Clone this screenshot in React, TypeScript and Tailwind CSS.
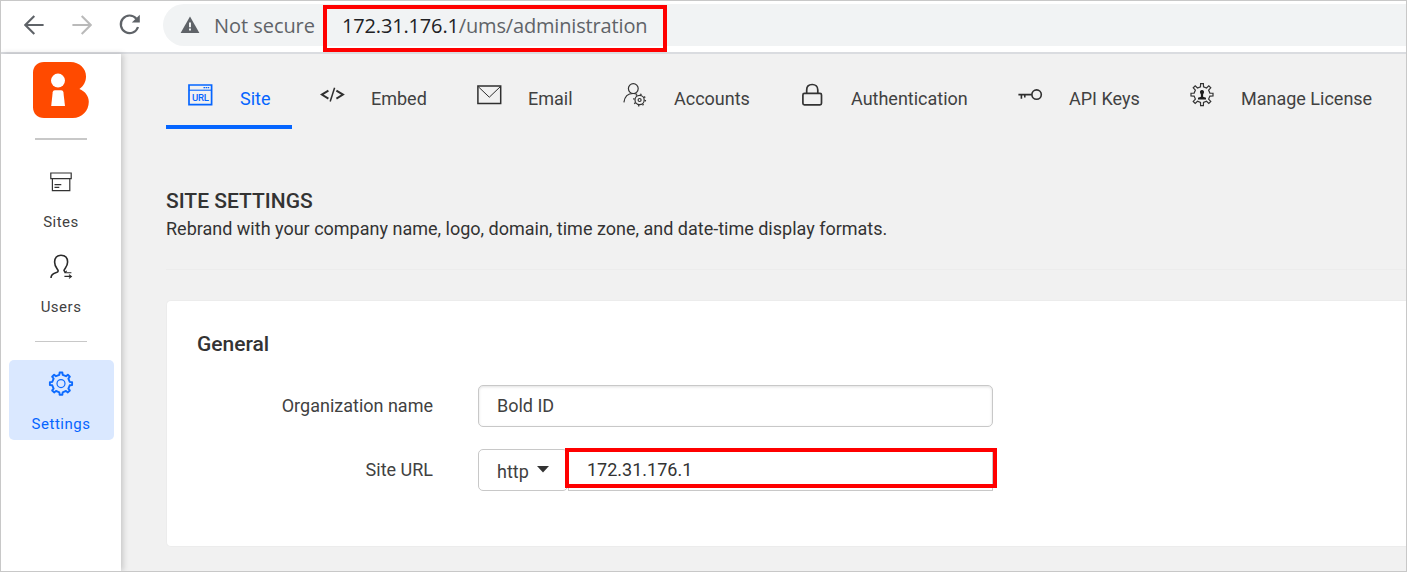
import type { ReactNode } from "react";

const gearPath = (cx: number, cy: number, outer: number, inner: number, teeth: number) => {
  const pts: string[] = [];
  const step = (Math.PI * 2) / teeth;
  for (let i = 0; i < teeth; i++) {
    const a = i * step - Math.PI / 2;
    const add = (r: number, t: number) =>
      pts.push(`${(cx + r * Math.cos(t)).toFixed(2)} ${(cy + r * Math.sin(t)).toFixed(2)}`);
    add(inner, a - step * 0.24);
    add(outer, a - step * 0.16);
    add(outer, a + step * 0.16);
    add(inner, a + step * 0.24);
  }
  return `M${pts.join("L")}Z`;
};

function BackArrow({ flip = false }: { flip?: boolean }) {
  return (
    <svg width="20" height="20" viewBox="0 0 20 20" fill="none" stroke={flip ? "#bababa" : "#5f6368"} strokeWidth="2.1" className={flip ? "-scale-x-100" : ""}>
      <path d="M19.6 10H1.6M10.3 1 1.3 10l9 9" />
    </svg>
  );
}

function Reload() {
  return (
    <svg width="22" height="22" viewBox="0 0 22 22" fill="none">
      <path d="M17.4 4.7A8.8 8.8 0 1 0 19 13" stroke="#5f6368" strokeWidth="2.2" />
      <path d="M20.8 .8V8.6h-8z" fill="#5f6368" />
    </svg>
  );
}

function Warning() {
  return (
    <svg width="20" height="18" viewBox="0 0 20 18">
      <path d="M10 .4 19.4 16.9H.6z" fill="#5f6368" />
      <path d="M9 6.6h2v4.6H9zM9 12.6h2v2H9z" fill="#f1f3f4" />
    </svg>
  );
}

function Logo() {
  return (
    <svg width="56" height="56" viewBox="0 0 56 56">
      <path d="M11 0H37.5C46.5 0 53 6.4 53 14.6C53 19.5 50.7 24.3 46.4 27C52.2 29.3 55.8 34.3 55.8 39.8C55.8 49 48.8 56 39.8 56H11C4.5 56 0 51.5 0 45.2V10.8C0 4.5 4.5 0 11 0Z" fill="#ff4a00" />
      <circle cx="25" cy="18.6" r="7" fill="#fff" />
      <path d="M21.8 28.3H28.2C29.4 28.3 30.2 29 30.4 30.3L32 43.9H18.2L19.7 30.3C19.9 29 20.6 28.3 21.8 28.3Z" fill="#fff" />
    </svg>
  );
}

function SitesIcon() {
  return (
    <svg width="22" height="20" viewBox="0 0 22 20" fill="none" stroke="#333" strokeWidth="1.2">
      <path d="M.8 1h20.4v5.6H.8zM2.4 6.6v12h17.4v-12M4.5 12.6h6.8M4.5 15.4h4.8" />
    </svg>
  );
}

function UsersIcon() {
  return (
    <svg width="24" height="26" viewBox="0 0 24 26" fill="none" stroke="#2b2b2b" strokeWidth="1.6">
      <path d="M2 24C2 17.8 9.2 19.6 9.2 17C9.2 15 5.6 13.4 5.6 8C5.6 3.8 8 1.2 12 1.2C16 1.2 18.6 3.8 18.6 8C18.6 13 15 14.8 15 16.6L16 18" />
      <path d="M22.4 18.8H15.4M17.8 16.8 15.4 18.8M15.4 22.4H22.4M20 24.4 22.4 22.4 20 20.6" strokeWidth="1.1" />
    </svg>
  );
}

function SettingsIcon() {
  return (
    <svg width="26" height="26" viewBox="0 0 26 26" fill="none" stroke="#0d6bff" strokeWidth="1.9" strokeLinejoin="round">
      <path d={gearPath(13, 12.6, 11.2, 8.9, 8)} />
      <circle cx="13" cy="12.6" r="4" strokeWidth="1.2" />
    </svg>
  );
}

function UrlIcon() {
  return (
    <svg width="25" height="22" viewBox="0 0 25 22" fill="none" stroke="#0565ff">
      <path d="M1 1h22.6v19.6H1z" strokeWidth="1.7" />
      <path d="M1 6.2h22.6" strokeWidth="1.1" />
      <path d="M15.5 3.7h6" strokeWidth="1.3" strokeDasharray="1.5 .6" />
      <text x="12.4" y="16.9" textAnchor="middle" fill="#0565ff" stroke="none" fontSize="9.6" fontWeight="500" fontFamily="Roboto, sans-serif" textLength="17">URL</text>
    </svg>
  );
}

function EmbedIcon() {
  return (
    <svg width="26" height="18" viewBox="0 0 26 18" fill="none" stroke="#2f2f2f" strokeWidth="1.9">
      <path d="M8.4 4.6 1.8 8.6l6.6 4M16.4 4.6l6.6 4-6.6 4" />
      <path d="M14.6 1.8 10.2 15.6" strokeWidth="1.5" />
    </svg>
  );
}

function EmailIcon() {
  return (
    <svg width="25" height="20" viewBox="0 0 25 20" fill="none" stroke="#2f2f2f">
      <path d="M.9 1h22.8v17.6H.9z" strokeWidth="1.5" />
      <path d="M1.4 1.8 12.3 12.2 23.2 1.8" strokeWidth="1" />
    </svg>
  );
}

function AccountsIcon() {
  return (
    <svg width="24" height="24" viewBox="0 0 24 24" fill="none" stroke="#333" strokeWidth="1.2">
      <circle cx="10.3" cy="5.6" r="4.9" />
      <path d="M.9 19.4C1.6 13.4 5 10.5 10.2 10.5c1.6 0 2.6.2 3.8.8" />
      <circle cx="16.6" cy="17" r="4.6" />
      <circle cx="16.6" cy="17" r="1.5" />
      <circle cx="16.6" cy="17" r="5.8" strokeWidth="1.4" strokeDasharray="1.4 3.15" />
    </svg>
  );
}

function LockIcon() {
  return (
    <svg width="22" height="24" viewBox="0 0 22 24" fill="none" stroke="#333" strokeWidth="1.7" className="ml-px">
      <rect x="1.9" y="10.4" width="18.6" height="11.4" rx="1.5" />
      <path d="M5.7 10.4V7C5.7 3.6 8 1.5 11.2 1.5s5.6 2.1 5.6 5.5v3.4" />
    </svg>
  );
}

function KeyIcon() {
  return (
    <svg width="25" height="14" viewBox="0 0 25 14" fill="none" stroke="#2f2f2f" strokeWidth="1.6">
      <circle cx="18.6" cy="6.6" r="4.7" />
      <path d="M13.9 6.6H.4M3.4 6.6V10.8M6.8 6.6V9.6" />
    </svg>
  );
}

function LicenseIcon() {
  return (
    <svg width="24" height="24" viewBox="0 0 24 24" fill="none" stroke="#333" strokeWidth="1.2">
      <path d={gearPath(12, 11.6, 11.1, 8, 8)} />
      <path d="M12 7a2 2 0 0 0-1.8 3l.7 1.6v2.2l-2.9 1v1.6h8v-1.6l-2.9-1v-2.2l.7-1.6a2 2 0 0 0-1.8-3Z" fill="#1d1d1d" stroke="none" />
    </svg>
  );
}

function Tab({ icon, label, width, text = "" }: { icon: ReactNode; label: string; width: string; text?: string }) {
  return (
    <div className={`flex h-full shrink-0 pl-[22px] ${width}`}>
      <div className="flex h-[82px] w-[51px] shrink-0 items-center">{icon}</div>
      <span className={`whitespace-nowrap pt-[31px] text-[18px] leading-[28px] ${text || "text-[#414141]"}`}>{label}</span>
    </div>
  );
}

export default function App() {
  return (
    <div className="flex h-[572px] w-[1407px] flex-col overflow-hidden border border-[#c8c8c8] bg-white font-[Roboto,sans-serif]">
      <header className="flex h-[53px] shrink-0 border-b-2 border-[#dadce0] bg-white">
        <div className="flex h-[48px] w-[162px] shrink-0 items-center pl-[23px]">
          <BackArrow />
          <div className="ml-[28px]"><BackArrow flip /></div>
          <div className="ml-[27px]"><Reload /></div>
        </div>
        <div className="relative mt-[3px] flex h-[42px] flex-1 items-center rounded-l-full bg-[#f1f3f4] pl-[17px] font-[Open_Sans,sans-serif] text-[20px] text-[#5f6368]">
          <Warning />
          <span className="ml-[14px] w-[111px] whitespace-nowrap pt-[2px] tracking-[-0.05px]">Not secure</span>
          <span className="h-6 w-px bg-[#9aa0a6]" />
          <span className="ml-[16px] whitespace-nowrap pt-[2px] tracking-[-0.16px]"><span className="text-[#202124]">172.31.176.1</span>/ums/administration</span>
          <div className="absolute left-[160px] top-[1px] h-[47px] w-[344px] border-4 border-[#ff0000]" />
        </div>
      </header>

      <div className="flex min-h-0 flex-1">
        <aside className="z-10 flex w-[120px] shrink-0 flex-col items-center bg-white shadow-[2px_0_6px_rgba(0,0,0,0.18)]">
          <div className="mt-[8px]"><Logo /></div>
          <div className="mt-[20px] h-[2px] w-[52px] bg-[#c8c8c8]" />
          <div className="mt-[32px] flex h-[20px] items-center"><SitesIcon /></div>
          <span className="mt-[20px] text-[15px] leading-[20px] tracking-[0.5px] text-[#414141]">Sites</span>
          <div className="mt-[22px] flex h-[26px] items-center"><UsersIcon /></div>
          <span className="mt-[17px] text-[15px] leading-[20px] tracking-[0.5px] text-[#414141]">Users</span>
          <div className="mt-[24px] h-px w-[52px] bg-[#c8c8c8]" />
          <div className="mt-[18px] flex h-[80px] w-[105px] flex-col items-center rounded-[5px] bg-[#dae8ff] pt-[11px]">
            <SettingsIcon />
            <span className="mt-[17px] text-[15px] leading-[20px] tracking-[0.5px] text-[#0565ff]">Settings</span>
          </div>
        </aside>

        <main className="flex min-w-0 flex-1 flex-col bg-[#f1f1f1] pl-[45px]">
          <nav className="flex h-[75px] shrink-0">
            <div className="mr-[6px] w-[126px] shrink-0 border-b-4 border-[#0565ff]">
              <Tab icon={<UrlIcon />} label="Site" width="w-[126px]" text="pl-px text-[#0565ff]" />
            </div>
            <Tab icon={<EmbedIcon />} label="Embed" width="w-[157px]" />
            <Tab icon={<EmailIcon />} label="Email" width="w-[146px]" />
            <Tab icon={<AccountsIcon />} label="Accounts" width="w-[177px]" />
            <Tab icon={<LockIcon />} label="Authentication" width="w-[218px]" />
            <Tab icon={<KeyIcon />} label="API Keys" width="w-[172px]" />
            <Tab icon={<LicenseIcon />} label="Manage License" width="w-[226px]" />
          </nav>
          <section className="mt-[58px] flex h-[83px] shrink-0 flex-col border-b border-[#ececec]">
            <h1 className="text-[21px] font-medium leading-[28px] text-[#333]">SITE SETTINGS</h1>
            <p className="text-[18px] leading-[28px] text-[#333]">Rebrand with your company name, logo, domain, time zone, and date-time display formats.</p>
          </section>
          <section className="mt-[30px] h-[247px] shrink-0 rounded-l-[5px] border border-r-0 border-[#ececec] bg-white pl-[31px] pt-[29px]">
            <h2 className="-ml-px text-[21px] font-medium leading-[28px] text-[#333]">General</h2>
            <div className="mt-[27px] flex h-[42px] items-center">
              <label className="w-[235px] pb-[2px] text-right text-[18px] text-[#414141]">Organization name</label>
              <div className="ml-[45px] flex h-[42px] w-[515px] items-center rounded-[5px] border border-[#c8c8c8] pb-[2px] pl-[18px] text-[18px] text-[#414141] shadow-[inset_0_1px_3px_rgba(0,0,0,0.12)]">Bold ID</div>
            </div>
            <div className="mt-[22px] flex h-[42px] items-center">
              <label className="w-[235px] pb-[2px] text-right text-[18px] text-[#414141]">Site URL</label>
              <div className="ml-[45px] flex h-[42px] w-[90px] items-center rounded-[5px] border border-[#c8c8c8] pl-[18px] pt-[2px] text-[18px] text-[#414141]">
                http
                <svg width="12" height="7" viewBox="0 0 12 7" className="-mt-1 ml-[8px]"><path d="M0 0h12L6 6.4z" fill="#333" /></svg>
              </div>
              <div className="relative flex h-[42px] w-[425px] items-center border border-[#c8c8c8] pb-[2px] pl-[18px] text-[18px] text-[#333]">
                172.31.176.1
                <div className="absolute -left-[4px] -top-[2px] h-[40px] w-[432px] border-4 border-[#ff0000]" />
              </div>
            </div>
          </section>
        </main>
      </div>
    </div>
  );
}
